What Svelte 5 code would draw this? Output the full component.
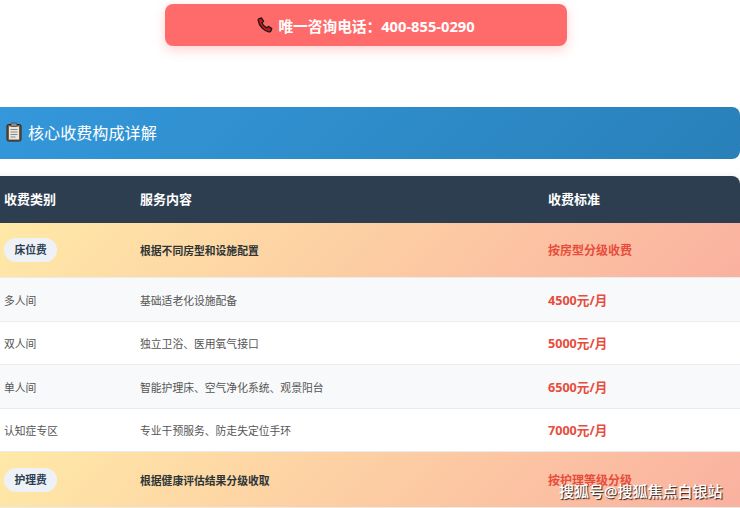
<script>
  const groups = [
    {
      tag: "床位费",
      desc: "根据不同房型和设施配置",
      price: "按房型分级收费",
      rows: [
        { name: "多人间", service: "基础适老化设施配备", price: "4500元/月" },
        { name: "双人间", service: "独立卫浴、医用氧气接口", price: "5000元/月" },
        { name: "单人间", service: "智能护理床、空气净化系统、观景阳台", price: "6500元/月" },
        { name: "认知症专区", service: "专业干预服务、防走失定位手环", price: "7000元/月" },
      ],
    },
    {
      tag: "护理费",
      desc: "根据健康评估结果分级收取",
      price: "按护理等级分级",
      rows: [],
    },
  ];
</script>

<div class="page">
  <div class="call">
    <svg class="phone" viewBox="0 0 16 16" aria-hidden="true">
      <path d="M2.2 1.6 4.6 1 6.6 4.4 5 5.9c.7 2 2.6 4 4.8 5l1.6-1.5 3.4 2.2-.8 2.2c-.3.8-1.2 1.2-2.2 1C6.600 13.600 2.200 9.200 1.200 3.600 1 2.700 1.400 1.900 2.200 1.600Z" fill="#c4161c" stroke="#1a1a1a" stroke-width="1.300" stroke-linejoin="round" />
    </svg>
    <span>唯一咨询电话：400-855-0290</span>
  </div>

  <div class="section">
    <h2>
      <svg class="clip" viewBox="0 0 16 20" aria-hidden="true">
        <rect x="1" y="2.500" width="14" height="16.500" rx="1.500" fill="#7a5a3c" stroke="#2b2118" stroke-width="1" />
        <rect x="3" y="4.500" width="10" height="13" fill="#e8e6e1" />
        <rect x="5" y="1" width="6" height="3.500" rx="1" fill="#8c8c8c" stroke="#333" stroke-width=".6" />
        <path d="M4.500 7.500h7M4.500 10h7M4.500 12.500h7M4.500 15h5" stroke="#8a8a8a" stroke-width="1" />
      </svg>
      核心收费构成详解
    </h2>
  </div>

  <table>
    <colgroup>
      <col class="c1" />
      <col class="c2" />
      <col />
    </colgroup>
    <thead>
      <tr>
        <th>收费类别</th>
        <th>服务内容</th>
        <th>收费标准</th>
      </tr>
    </thead>
    <tbody>
      {#each groups as group}
        <tr class="group">
          <td><span class="tag">{group.tag}</span></td>
          <td class="desc">{group.desc}</td>
          <td class="price">{group.price}</td>
        </tr>
        {#each group.rows as row}
          <tr class="item">
            <td>{row.name}</td>
            <td>{row.service}</td>
            <td class="price">{row.price}</td>
          </tr>
        {/each}
      {/each}
    </tbody>
  </table>

  <div class="mark">搜狐号@搜狐焦点白银站</div>
</div>

<style>
  :global(body) {
    margin: 0;
    background: #fff;
  }
  .page {
    position: relative;
    width: 740px;
    height: 508px;
    overflow: hidden;
    font-family: "Noto Sans", "Noto Sans CJK SC", sans-serif;
    color: #333;
  }
  .call {
    width: 402px;
    height: 42px;
    margin: 4px 0 0 165px;
    display: flex;
    align-items: center;
    justify-content: center;
    gap: 5px;
    background: #ff6b6b;
    border-radius: 8px;
    box-shadow: 0 4px 12px rgba(255, 107, 107, 0.3);
    color: #fff;
    font-size: 14.7px;
    font-weight: 700;
  }
  .phone {
    width: 16px;
    height: 16px;
  }
  .section {
    width: 752px;
    height: 52px;
    margin: 61px 0 0 -12px;
    box-sizing: border-box;
    padding: 0 0 2px 18px;
    display: flex;
    align-items: center;
    background: linear-gradient(135deg, #3498db, #2980b9);
    border-radius: 8px;
  }
  h2 {
    margin: 0;
    display: flex;
    align-items: center;
    gap: 6px;
    color: #fff;
    font-size: 16.1px;
    font-weight: 400;
  }
  .clip {
    width: 16px;
    height: 20px;
  }
  table {
    width: 752px;
    margin: 17px 0 0 -12px;
    border-collapse: separate;
    border-spacing: 0;
    table-layout: fixed;
    font-size: 10.800px;
    box-shadow: 0 0 6px rgba(0, 0, 0, 0.08);
    border-radius: 8px 8px 0 0;
  }
  .c1 {
    width: 136px;
  }
  .c2 {
    width: 408px;
  }
  th {
    box-sizing: border-box;
    height: 47px;
    padding: 0 16px 2px;
    text-align: left;
    background: #2c3e50;
    color: #fff;
    font-size: 13px;
    font-weight: 700;
  }
  th:first-child {
    border-top-left-radius: 8px;
  }
  th:last-child {
    border-top-right-radius: 8px;
  }
  td {
    box-sizing: border-box;
    padding: 0 16px;
    border-bottom: 1px solid #e9ecef;
    color: #555;
  }
  .group {
    background: linear-gradient(135deg, #ffeaa7, #fab1a0);
  }
  .group td {
    height: 56px;
    font-weight: 700;
    color: #2d3436;
  }
  .group:first-child td {
    height: 55px;
  }
  .item td {
    height: 43px;
  }
  .item:nth-child(even) {
    background: #f8f9fa;
  }
  .item:nth-child(even) td {
    height: 44px;
  }
  .tag {
    display: inline-block;
    vertical-align: middle;
    padding: 0 10.500px;
    height: 24px;
    line-height: 24px;
    border-radius: 12px;
    background: #eef2f7;
    color: #2c3e50;
  }
  td.price {
    color: #e74c3c;
    font-size: 12.600px;
    font-weight: 700;
    padding-bottom: 1px;
  }
  .group td.price {
    font-size: 12px;
    padding-bottom: 0;
  }
  .mark {
    position: absolute;
    left: 559px;
    top: 480px;
    color: #fff;
    font-size: 15px;
    font-weight: 500;
    line-height: 22px;
    white-space: nowrap;
    text-shadow: 1px 1px 1px rgba(0, 0, 0, 0.85);
  }
</style>
